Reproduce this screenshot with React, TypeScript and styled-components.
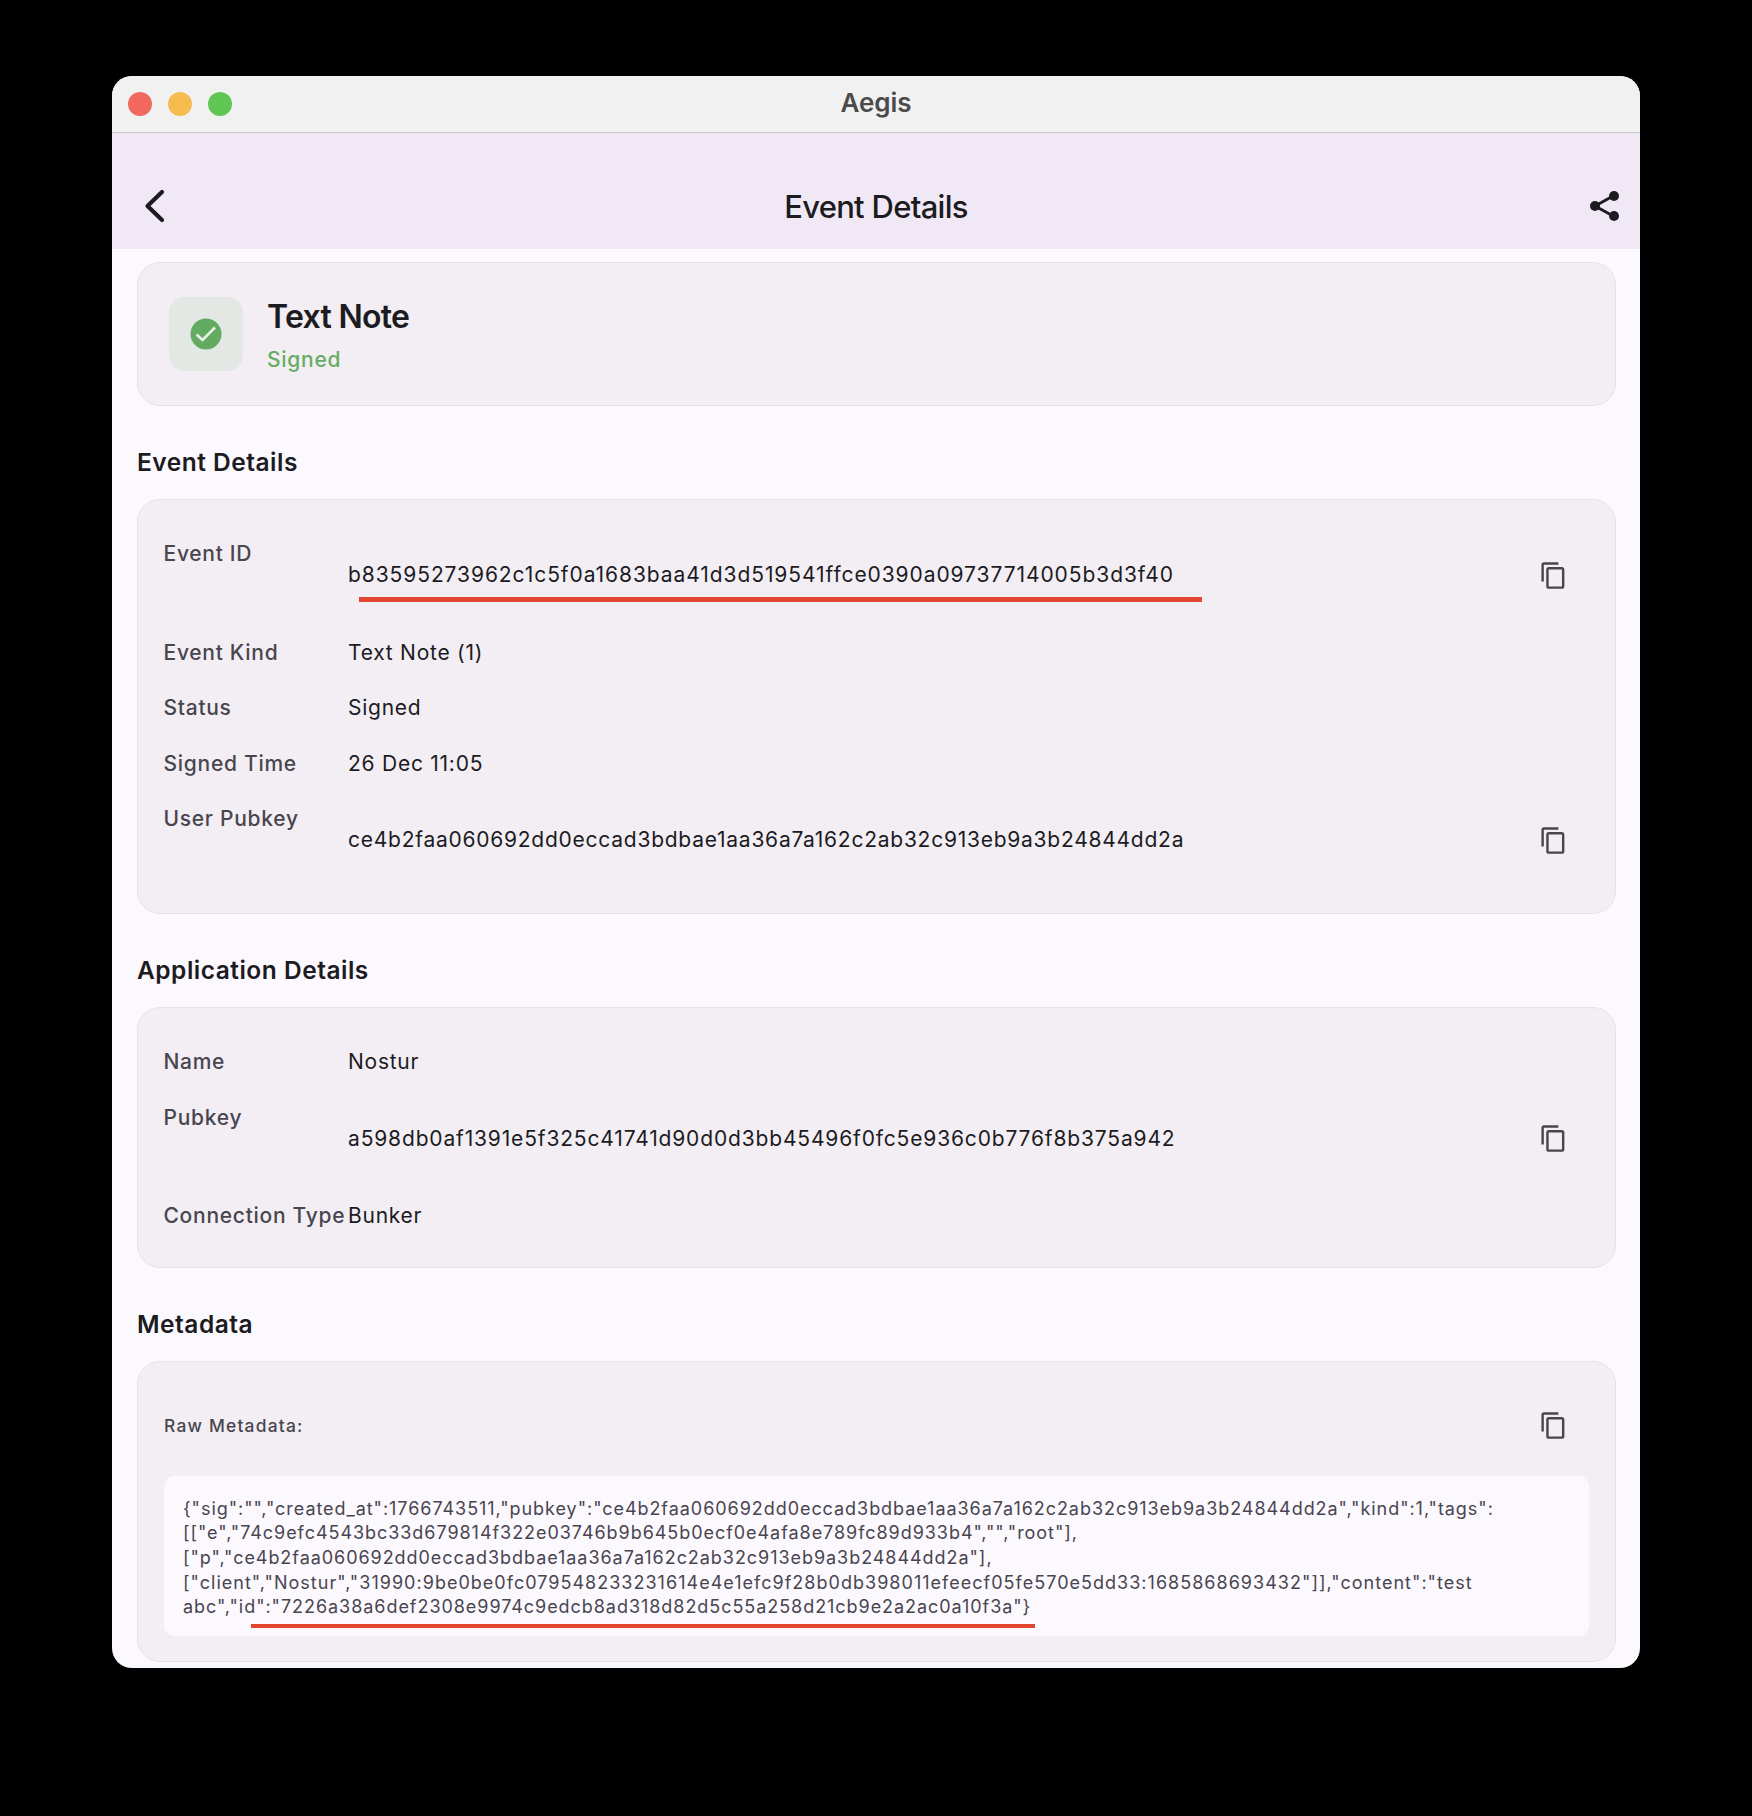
import React from "react";
import styled, { createGlobalStyle } from "styled-components";

const GlobalStyle = createGlobalStyle`
    html, body {
        margin: 0;
        padding: 0;
        background: #000;
    }
`;

const Page = styled.div`
    width: 1752px;
    height: 1816px;
    box-sizing: border-box;
    padding: 76px 112px 148px;
    background: #000;
    font-family: Inter, "Noto Sans", sans-serif;
`;

const Window = styled.div`
    height: 1592px;
    border-radius: 20px;
    overflow: hidden;
    background: #fbf8fe;
    display: flex;
    flex-direction: column;
`;

const TitleBar = styled.div`
    height: 56px;
    flex: none;
    display: grid;
    grid-template-columns: 1fr auto 1fr;
    align-items: center;
    padding: 0 16px;
    background: #f1f1f1;
    border-bottom: 1px solid #c9c7cc;
`;

const Lights = styled.div`
    display: flex;
    gap: 16px;
`;

const Light = styled.span<{ $color: string }>`
    width: 24px;
    height: 24px;
    border-radius: 50%;
    background: ${(p) => p.$color};
`;

const WindowName = styled.div`
    font-size: 26px;
    font-weight: 600;
    color: #4b4b4b;
    padding-bottom: 4px;
`;

const AppBar = styled.div`
    height: 116px;
    flex: none;
    display: flex;
    align-items: center;
    justify-content: space-between;
    padding: 30px 19px 0 29px;
    box-sizing: border-box;
    background: #f0e9f5;
    position: relative;
`;

const AppBarTitle = styled.div`
    position: absolute;
    left: 0;
    right: 0;
    top: 53px;
    text-align: center;
    font-size: 31px;
    line-height: 42px;
    font-weight: 500;
    letter-spacing: -0.7px;
    color: #1c1b1f;
`;

const Body = styled.div`
    padding: 13px 24px 0 25px;
    display: flex;
    flex-direction: column;
`;

const Card = styled.div`
    box-sizing: border-box;
    background: #f2eef3;
    border: 1.5px solid #e6e2e8;
    border-radius: 23px;
    padding: 40px 26px 37px 25.5px;
`;

const SummaryCard = styled(Card)`
    height: 144px;
    padding: 0 31px;
    display: flex;
    align-items: center;
    gap: 24px;
`;

const StatusBadge = styled.div`
    width: 74px;
    height: 74px;
    border-radius: 15px;
    background: #e4e8e4;
    display: flex;
    align-items: center;
    justify-content: center;
`;

const SummaryText = styled.div`
    display: flex;
    flex-direction: column;
    gap: 8px;
    margin-top: 2px;
`;

const SummaryTitle = styled.div`
    font-size: 32px;
    line-height: 42px;
    font-weight: 600;
    letter-spacing: -0.7px;
    color: #1c1b1f;
`;

const SummaryStatus = styled.div`
    font-size: 21px;
    line-height: 28px;
    font-weight: 500;
    letter-spacing: 0.75px;
    color: #66ad64;
`;

const SectionTitle = styled.h2`
    margin: 41px 0 21px;
    font-size: 24.5px;
    line-height: 31px;
    font-weight: 600;
    letter-spacing: 0.5px;
    color: #1c1b1f;
`;

const Rows = styled.div`
    display: flex;
    flex-direction: column;
    gap: 27.5px;
`;

const Row = styled.div<{ $tall?: boolean }>`
    display: flex;
    align-items: flex-start;
    min-height: ${(p) => (p.$tall ? "71px" : "28px")};
    position: relative;
`;

const Label = styled.div`
    width: 184.5px;
    flex: none;
    font-size: 21px;
    line-height: 28px;
    font-weight: 450;
    letter-spacing: 0.72px;
    color: #49454f;
    white-space: nowrap;
`;

const Value = styled.div`
    flex: 1;
    font-size: 21px;
    line-height: 28px;
    letter-spacing: 0.75px;
    color: #1c1b1f;
    white-space: nowrap;
`;

const HashValue = styled(Value)<{ $tracking: number }>`
    margin-top: 21px;
    letter-spacing: ${(p) => p.$tracking}px;
`;

const CopyButton = styled.button`
    width: 32px;
    height: 32px;
    margin: 19px 20px 0 0;
    padding: 0;
    border: 0;
    background: none;
    color: #49454f;
    display: flex;
    align-items: center;
    justify-content: center;
`;

const Underline = styled.div<{ $left: number; $width: number; $top: number }>`
    position: absolute;
    left: ${(p) => p.$left}px;
    top: ${(p) => p.$top}px;
    width: ${(p) => p.$width}px;
    height: 4.5px;
    background: #e2462e;
`;

const MetaHead = styled.div`
    display: flex;
    align-items: flex-start;
    justify-content: space-between;
    height: 43px;
`;

const MetaLabel = styled.div`
    margin-top: 20px;
    font-size: 17.4px;
    line-height: 32px;
    font-weight: 500;
    letter-spacing: 1.2px;
    color: #49454f;
`;

const RawBox = styled.div`
    position: relative;
    margin: 42.5px 0 0;
    padding: 21px 18px 16px 19px;
    height: 160px;
    box-sizing: border-box;
    border-radius: 10px;
    background: #fbf8fe;
    font-size: 18px;
    line-height: 24.7px;
    color: #49454f;
`;

const RawLine = styled.div<{ $tracking: number }>`
    white-space: nowrap;
    letter-spacing: ${(p) => p.$tracking}px;
`;

const RawCard = styled(Card)`
    padding: 28px 26px 0;
    height: 301px;
`;

const BackIcon = () => (
    <svg width="24" height="36" viewBox="0 0 24 36" fill="none">
        <path d="M21 4 L6.5 18 L21 32" stroke="#1c1b1f" strokeWidth="4.2" strokeLinecap="round" strokeLinejoin="round" />
    </svg>
);

const ShareIcon = () => (
    <svg width="32" height="32" viewBox="0 0 32 32" fill="#1c1b1f">
        <path d="M6 16 L25 5.5 M6 16 L25 26.5" stroke="#1c1b1f" strokeWidth="3" />
        <circle cx="6" cy="16" r="5" />
        <circle cx="25" cy="6" r="5" />
        <circle cx="25" cy="26" r="5" />
    </svg>
);

const CheckIcon = () => (
    <svg width="32" height="32" viewBox="0 0 32 32">
        <circle cx="16" cy="16" r="15.5" fill="#62ab60" />
        <path d="M6.5 16.5 L12.5 22 L25 9.5" fill="none" stroke="#e9f0e8" strokeWidth="2.6" />
    </svg>
);

const CopyIcon = () => (
    <svg width="29" height="29" viewBox="0 0 24 24" fill="currentColor">
        <path d="M16 1H4c-1.1 0-2 .9-2 2v14h2V3h12V1zm3 4H8c-1.1 0-2 .9-2 2v14c0 1.1.9 2 2 2h11c1.1 0 2-.9 2-2V7c0-1.1-.9-2-2-2zm0 16H8V7h11v14z" />
    </svg>
);

const RAW_LINES = [
    { text: '{"sig":"","created_at":1766743511,"pubkey":"ce4b2faa060692dd0eccad3bdbae1aa36a7a162c2ab32c913eb9a3b24844dd2a","kind":1,"tags":', tracking: 0.95 },
    { text: '[["e","74c9efc4543bc33d679814f322e03746b9b645b0ecf0e4afa8e789fc89d933b4","","root"],', tracking: 0.95 },
    { text: '["p","ce4b2faa060692dd0eccad3bdbae1aa36a7a162c2ab32c913eb9a3b24844dd2a"],', tracking: 0.95 },
    { text: '["client","Nostur","31990:9be0be0fc079548233231614e4e1efc9f28b0db398011efeecf05fe570e5dd33:1685868693432"]],"content":"test', tracking: 1.02 },
    { text: 'abc","id":"7226a38a6def2308e9974c9edcb8ad318d82d5c55a258d21cb9e2a2ac0a10f3a"}', tracking: 0.95 },
];

export default function App() {
    return (
        <Page>
            <GlobalStyle />
            <Window>
                <TitleBar>
                    <Lights>
                        <Light $color="#f0685e" />
                        <Light $color="#f5bd4f" />
                        <Light $color="#61c554" />
                    </Lights>
                    <WindowName>Aegis</WindowName>
                </TitleBar>
                <AppBar>
                    <BackIcon />
                    <AppBarTitle>Event Details</AppBarTitle>
                    <ShareIcon />
                </AppBar>
                <Body>
                    <SummaryCard>
                        <StatusBadge>
                            <CheckIcon />
                        </StatusBadge>
                        <SummaryText>
                            <SummaryTitle>Text Note</SummaryTitle>
                            <SummaryStatus>Signed</SummaryStatus>
                        </SummaryText>
                    </SummaryCard>

                    <SectionTitle>Event Details</SectionTitle>
                    <Card>
                        <Rows>
                            <Row $tall>
                                <Label>Event ID</Label>
                                <HashValue $tracking={0.92}>b83595273962c1c5f0a1683baa41d3d519541ffce0390a09737714005b3d3f40</HashValue>
                                <CopyButton><CopyIcon /></CopyButton>
                                <Underline $left={195.5} $top={57} $width={843} />
                            </Row>
                            <Row>
                                <Label>Event Kind</Label>
                                <Value>Text Note (1)</Value>
                            </Row>
                            <Row>
                                <Label>Status</Label>
                                <Value>Signed</Value>
                            </Row>
                            <Row>
                                <Label>Signed Time</Label>
                                <Value>26 Dec 11:05</Value>
                            </Row>
                            <Row $tall>
                                <Label>User Pubkey</Label>
                                <HashValue $tracking={0.75}>ce4b2faa060692dd0eccad3bdbae1aa36a7a162c2ab32c913eb9a3b24844dd2a</HashValue>
                                <CopyButton><CopyIcon /></CopyButton>
                            </Row>
                        </Rows>
                    </Card>

                    <SectionTitle>Application Details</SectionTitle>
                    <Card>
                        <Rows>
                            <Row>
                                <Label>Name</Label>
                                <Value>Nostur</Value>
                            </Row>
                            <Row $tall>
                                <Label>Pubkey</Label>
                                <HashValue $tracking={0.84}>a598db0af1391e5f325c41741d90d0d3bb45496f0fc5e936c0b776f8b375a942</HashValue>
                                <CopyButton><CopyIcon /></CopyButton>
                            </Row>
                            <Row>
                                <Label>Connection Type</Label>
                                <Value>Bunker</Value>
                            </Row>
                        </Rows>
                    </Card>

                    <SectionTitle>Metadata</SectionTitle>
                    <RawCard>
                        <MetaHead>
                            <MetaLabel>Raw Metadata:</MetaLabel>
                            <CopyButton><CopyIcon /></CopyButton>
                        </MetaHead>
                        <RawBox>
                            {RAW_LINES.map((line) => (
                                <RawLine key={line.text} $tracking={line.tracking}>{line.text}</RawLine>
                            ))}
                            <Underline $left={87} $top={148} $width={784} />
                        </RawBox>
                    </RawCard>
                </Body>
            </Window>
        </Page>
    );
}
